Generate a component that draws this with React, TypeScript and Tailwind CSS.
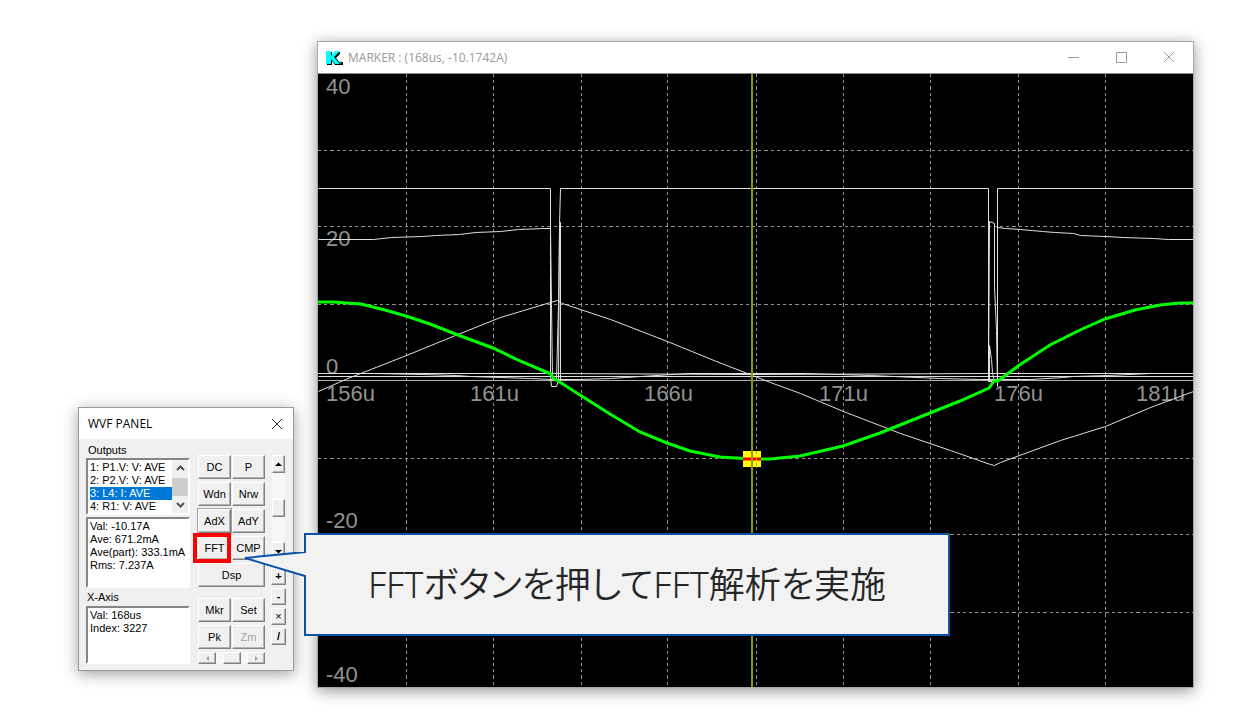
import { useState } from "react";
import type { ReactNode } from "react";

const OUTPUTS = ["1: P1.V: V: AVE", "2: P2.V: V: AVE", "3: L4: I: AVE", "4: R1: V: AVE"];

const GRID_X = [88, 175, 263, 349, 438, 525, 612, 700, 787];
const GRID_Y = [76, 152, 230, 384, 460, 538];

const Y_LABELS = [
  { text: "40", y: 20 },
  { text: "20", y: 172 },
  { text: "0", y: 300 },
  { text: "-20", y: 454 },
  { text: "-40", y: 608 },
];

const X_LABELS = [
  { text: "156u", x: 8 },
  { text: "161u", x: 152 },
  { text: "166u", x: 326 },
  { text: "171u", x: 501 },
  { text: "176u", x: 676 },
  { text: "181u", x: 818 },
];

const WHITE_TRACES = [
  "0,114 232,114 232,302 233,312 238,312 240,306 241,150 242,114 670,114 670,307 679,307 679,114 875,114",
  "0,165 55,165 73,163 104,162 117,161 141,160 157,158 182,157 200,155 226,154 232,154 233,230 234,306 238,306 240,230 241,158 242,148 242,306",
  "670,306 671,147 676,149 676,212 678,256 679,312 679,153 687,154 702,155 724,157 737,158 755,159 762,161 787,162 805,163 835,164 850,165 875,165",
  "0,317 27,305 88,281 137,261 182,243 232,228 239,226 244,229 292,245 349,267 398,287 434,301 452,308 482,319 525,337 582,359 632,376 672,390 676,391 682,388 742,366 787,352 832,333 875,317",
  "0,299 233,299 434,300 671,299 875,299",
  "0,302 875,302",
  "0,299 56,299 104,300 138,301 152,302 182,303 212,304 234,305 262,305 292,304 307,303 322,302 370,299 489,299 552,301 622,304 662,305 692,305 712,305 745,303 755,302 789,301 832,299 875,299",
  "671,306 671,271 673,285 674,298 676,307",
];

const GREEN_TRACE =
  "0,228 15,228 43,230 67,236 88,242 112,250 140,261 175,274 202,287 233,300 236,305 240,307 262,321 292,340 322,358 349,369 372,377 402,383 434,385 452,385 482,382 525,372 562,359 592,347 612,339 642,327 671,314 676,307 680,307 700,292 732,271 762,256 787,245 817,236 842,231 862,229 875,229";

const RAISED =
  "border border-t-white border-l-white border-r-[#808080] border-b-[#808080] bg-[#f0f0f0] shadow-[inset_-1px_-1px_0_#b4b4b4]";
const SUNKEN =
  "border-2 border-t-[#858585] border-l-[#858585] border-r-white border-b-white bg-white";

function PushButton({ children, className = "", disabled = false }: { children: ReactNode; className?: string; disabled?: boolean }) {
  return (
    <button type="button" disabled={disabled} className={`${RAISED} flex h-6 items-center justify-center text-[11px] leading-none disabled:text-[#a0a0a0] ${className}`}>
      {children}
    </button>
  );
}

function SmallButton({ children, label, className }: { children?: ReactNode; label: string; className: string }) {
  return (
    <button type="button" aria-label={label} className={`${RAISED} flex items-center justify-center text-[11px] leading-none ${className}`}>
      {children}
    </button>
  );
}

function Triangle({ points, className = "fill-black" }: { points: string; className?: string }) {
  return (
    <svg viewBox="0 0 7 7" className={`size-[7px] ${className}`} aria-hidden="true">
      <polygon points={points} />
    </svg>
  );
}

function Chevron({ d }: { d: string }) {
  return (
    <svg viewBox="0 0 9 6" className="h-[6px] w-[9px] fill-none stroke-[#505050] stroke-2" aria-hidden="true">
      <path d={d} />
    </svg>
  );
}

function OutputList() {
  const [selected, setSelected] = useState(2);
  return (
    <div className={`${SUNKEN} flex h-[57px]`}>
      <div role="listbox" aria-labelledby="outputs-label" className="flex flex-1 flex-col pt-px pl-0.5">
        {OUTPUTS.map((name, i) => (
          <button
            key={name}
            type="button"
            role="option"
            aria-selected={i === selected}
            onClick={() => setSelected(i)}
            className={`h-[13px] text-left text-[11px] leading-[13px] whitespace-nowrap ${i === selected ? "bg-[#0078d7] text-white" : ""}`}
          >
            {name}
          </button>
        ))}
      </div>
      <div className="flex w-4 flex-col items-center justify-between bg-[#f0f0f0]">
        <button type="button" aria-label="Scroll up" className="flex h-4 w-full items-center justify-center">
          <Chevron d="M1 5 4.500 1.500 8 5" />
        </button>
        <div className="h-[18px] w-full bg-[#cdcdcd]" />
        <button type="button" aria-label="Scroll down" className="flex h-4 w-full items-center justify-center">
          <Chevron d="M1 1 4.500 4.500 8 1" />
        </button>
      </div>
    </div>
  );
}

function WvfPanel() {
  return (
    <section className="mt-[407px] w-[216px] shrink-0 border border-[#9a9a9a] bg-[#f0f0f0] font-['Liberation_Sans',sans-serif] text-[11px] text-black shadow-[0_3px_14px_rgba(0,0,0,0.38)]">
      <header className="flex h-[31px] items-center justify-between bg-white pr-2.5 pl-[9px]">
        <h2 className="font-['Open_Sans',sans-serif] text-xs">WVF PANEL</h2>
        <button type="button" aria-label="Close panel">
          <svg viewBox="0 0 12 12" className="size-3 fill-none stroke-[#303030]" aria-hidden="true">
            <path d="M1 1 11 11M11 1 1 11" />
          </svg>
        </button>
      </header>
      <div className="flex px-[7px] pb-1.5">
        <div className="flex w-[104px] flex-col pt-[3px]">
          <span id="outputs-label" className="h-4 pl-0.5 leading-4">Outputs</span>
          <OutputList />
          <textarea
            readOnly
            aria-label="Output values"
            value={"Val: -10.17A\nAve: 671.2mA\nAve(part): 333.1mA\nRms: 7.237A"}
            className={`${SUNKEN} mt-0.5 h-[71px] resize-none overflow-hidden pt-px pl-0.5 leading-[13px] whitespace-pre outline-none`}
          />
          <label htmlFor="x-axis" className="h-[18px] pl-px leading-[18px]">X-Axis</label>
          <textarea
            id="x-axis"
            readOnly
            value={"Val: 168us\nIndex: 3227"}
            className={`${SUNKEN} h-[58px] resize-none overflow-hidden pt-px pl-0.5 leading-[13px] outline-none`}
          />
        </div>

        <div className="ml-2 flex w-[67px] flex-col gap-[11px] pt-4">
          <div className="grid grid-cols-2 gap-x-px gap-y-[3px]">
            <PushButton>DC</PushButton>
            <PushButton>P</PushButton>
            <PushButton>Wdn</PushButton>
            <PushButton>Nrw</PushButton>
            <PushButton className="outline outline-[#a0a0a0]">AdX</PushButton>
            <PushButton>AdY</PushButton>
            <div className="relative">
              <PushButton className="w-full">FFT</PushButton>
              <span className="pointer-events-none absolute -inset-y-[3px] right-0 -left-[5px] border-4 border-[#ff0000]" />
            </div>
            <PushButton>CMP</PushButton>
            <PushButton className="col-span-2">Dsp</PushButton>
          </div>
          <div className="grid grid-cols-2 gap-x-px gap-y-[3px]">
            <PushButton>Mkr</PushButton>
            <PushButton>Set</PushButton>
            <PushButton>Pk</PushButton>
            <PushButton disabled>Zm</PushButton>
            <div className="col-span-2 flex h-3 justify-between bg-[#f7f7f7]">
              <SmallButton label="Scroll left" className="w-[18px]">
                <Triangle points="5,1 5,6 2,3.500" className="fill-[#a0a0a0]" />
              </SmallButton>
              <SmallButton label="Scroll position" className="w-[18px]" />
              <SmallButton label="Scroll right" className="w-[18px]">
                <Triangle points="2,1 2,6 5,3.500" className="fill-[#a0a0a0]" />
              </SmallButton>
            </div>
          </div>
        </div>

        <div className="ml-1.5 flex w-[15px] flex-col gap-2 pt-4">
          <div className="mx-px flex h-[105px] flex-col justify-between bg-[#f7f7f7]">
            <SmallButton label="Increase" className="h-[18px]">
              <Triangle points="0,5 7,5 3.500,1.500" />
            </SmallButton>
            <SmallButton label="Level" className="h-[18px]" />
            <SmallButton label="Decrease" className="h-[18px]">
              <Triangle points="0,2 7,2 3.500,5.500" />
            </SmallButton>
          </div>
          <div className="flex flex-col gap-[3px]">
            <SmallButton label="Add" className="h-[17px] font-bold">+</SmallButton>
            <SmallButton label="Subtract" className="h-[17px] font-bold">-</SmallButton>
            <SmallButton label="Multiply" className="h-[17px]">×</SmallButton>
            <SmallButton label="Divide" className="h-[17px] font-bold">/</SmallButton>
          </div>
        </div>
      </div>
    </section>
  );
}

function Waveform() {
  return (
    <svg viewBox="0 0 875 613" className="block h-auto w-full bg-black" role="img" aria-label="Waveforms">
      <g className="fill-none stroke-[#929292]" strokeDasharray="3.200 3" shapeRendering="crispEdges">
        {GRID_X.map((x) => (
          <path key={x} d={`M${x + 0.5} 0V613`} />
        ))}
        {GRID_Y.map((y) => (
          <path key={y} d={`M0 ${y + 0.5}H875`} />
        ))}
      </g>
      <g className="fill-[#929292] font-['Liberation_Sans',sans-serif] text-[22px]">
        {Y_LABELS.map((l) => (
          <text key={l.text} x="8" y={l.y}>{l.text}</text>
        ))}
        {X_LABELS.map((l) => (
          <text key={l.text} x={l.x} y="327">{l.text}</text>
        ))}
      </g>
      <path d="M0 306.500H875" className="stroke-[#b0b0b0]" />
      <g className="fill-none stroke-[#e0e0e0]" transform="translate(0.500 0.500)">
        {WHITE_TRACES.map((points) => (
          <polyline key={points} points={points} />
        ))}
      </g>
      <polyline points={GREEN_TRACE} className="fill-none stroke-[#00ff00] stroke-3" />
      <rect x="425" y="377" width="18" height="16" className="fill-[#ffff00]" />
      <path d="M425 385H443" className="stroke-[#ff0000] stroke-3" />
      <path d="M438.500 377V393" strokeDasharray="3.200 3" className="stroke-[#a0a070]" />
      <path d="M434 0V613" className="stroke-[#989400] stroke-2" />
    </svg>
  );
}

function MarkerWindow() {
  return (
    <section className="mt-[41px] ml-[23px] min-w-0 flex-1 border border-[#a8a8a8] bg-white shadow-[0_3px_14px_rgba(0,0,0,0.42)]">
      <header className="flex h-8 items-center border-b border-[#8c8c8c]">
        <svg viewBox="0 0 18 16" className="ml-2 h-4 w-[18px]" aria-hidden="true">
          <path d="M1 2h5v4l4-4h4v2L10 8l4 5v2H9l-3-4v4H1z" className="fill-black" />
          <path d="M0 1h5v5l4-5h4v1L8 7l5 6v1H9L5 9v5H0z" className="fill-[#00ffff]" />
          <path d="M14 12h3v3h-3z" className="fill-black" />
          <path d="M13.500 11.500h2v2h-2z" className="fill-[#00a0a0]" />
        </svg>
        <h1 className="ml-1 flex-1 font-['Open_Sans',sans-serif] text-xs text-[#999999]">MARKER : (168us, -10.1742A)</h1>
        <div className="flex items-center gap-9 pr-[18px]">
          {["M1 5.500H12", "M1.500 0.500H11.500V10.500H1.500z", "M1 0 11 10M11 0 1 10"].map((d, i) => (
            <button key={d} type="button" aria-label={["Minimize", "Maximize", "Close"][i]}>
              <svg viewBox="0 0 12 12" className="size-3 fill-none stroke-[#999999]" aria-hidden="true">
                <path d={d} />
              </svg>
            </button>
          ))}
        </div>
      </header>
      <Waveform />
    </section>
  );
}

function Callout() {
  return (
    <aside className="absolute top-[533px] left-[304px] flex h-[103px] w-[646px] items-center justify-center border-2 border-[#0b52a5] bg-[#f2f2f2]">
      <svg viewBox="0 0 64 28" className="absolute top-4 -left-[62px] h-7 w-16" aria-hidden="true">
        <path d="M64 0H61V1L1 7 61 25V26H64z" className="fill-[#f2f2f2]" />
        <path d="M61 0V1L1 7 61 25V28" className="fill-none stroke-[#0b52a5] stroke-2" />
      </svg>
      <p className="font-['Noto_Sans','Noto_Sans_CJK_JP',sans-serif] text-4xl font-[350] whitespace-nowrap text-[#262626] [font-feature-settings:'palt']">
        FFTボタンを押してFFT解析を実施
      </p>
    </aside>
  );
}

export default function App() {
  return (
    <main className="relative flex min-h-screen items-start bg-white pr-[60px] pb-6 pl-[78px]">
      <WvfPanel />
      <MarkerWindow />
      <Callout />
    </main>
  );
}
